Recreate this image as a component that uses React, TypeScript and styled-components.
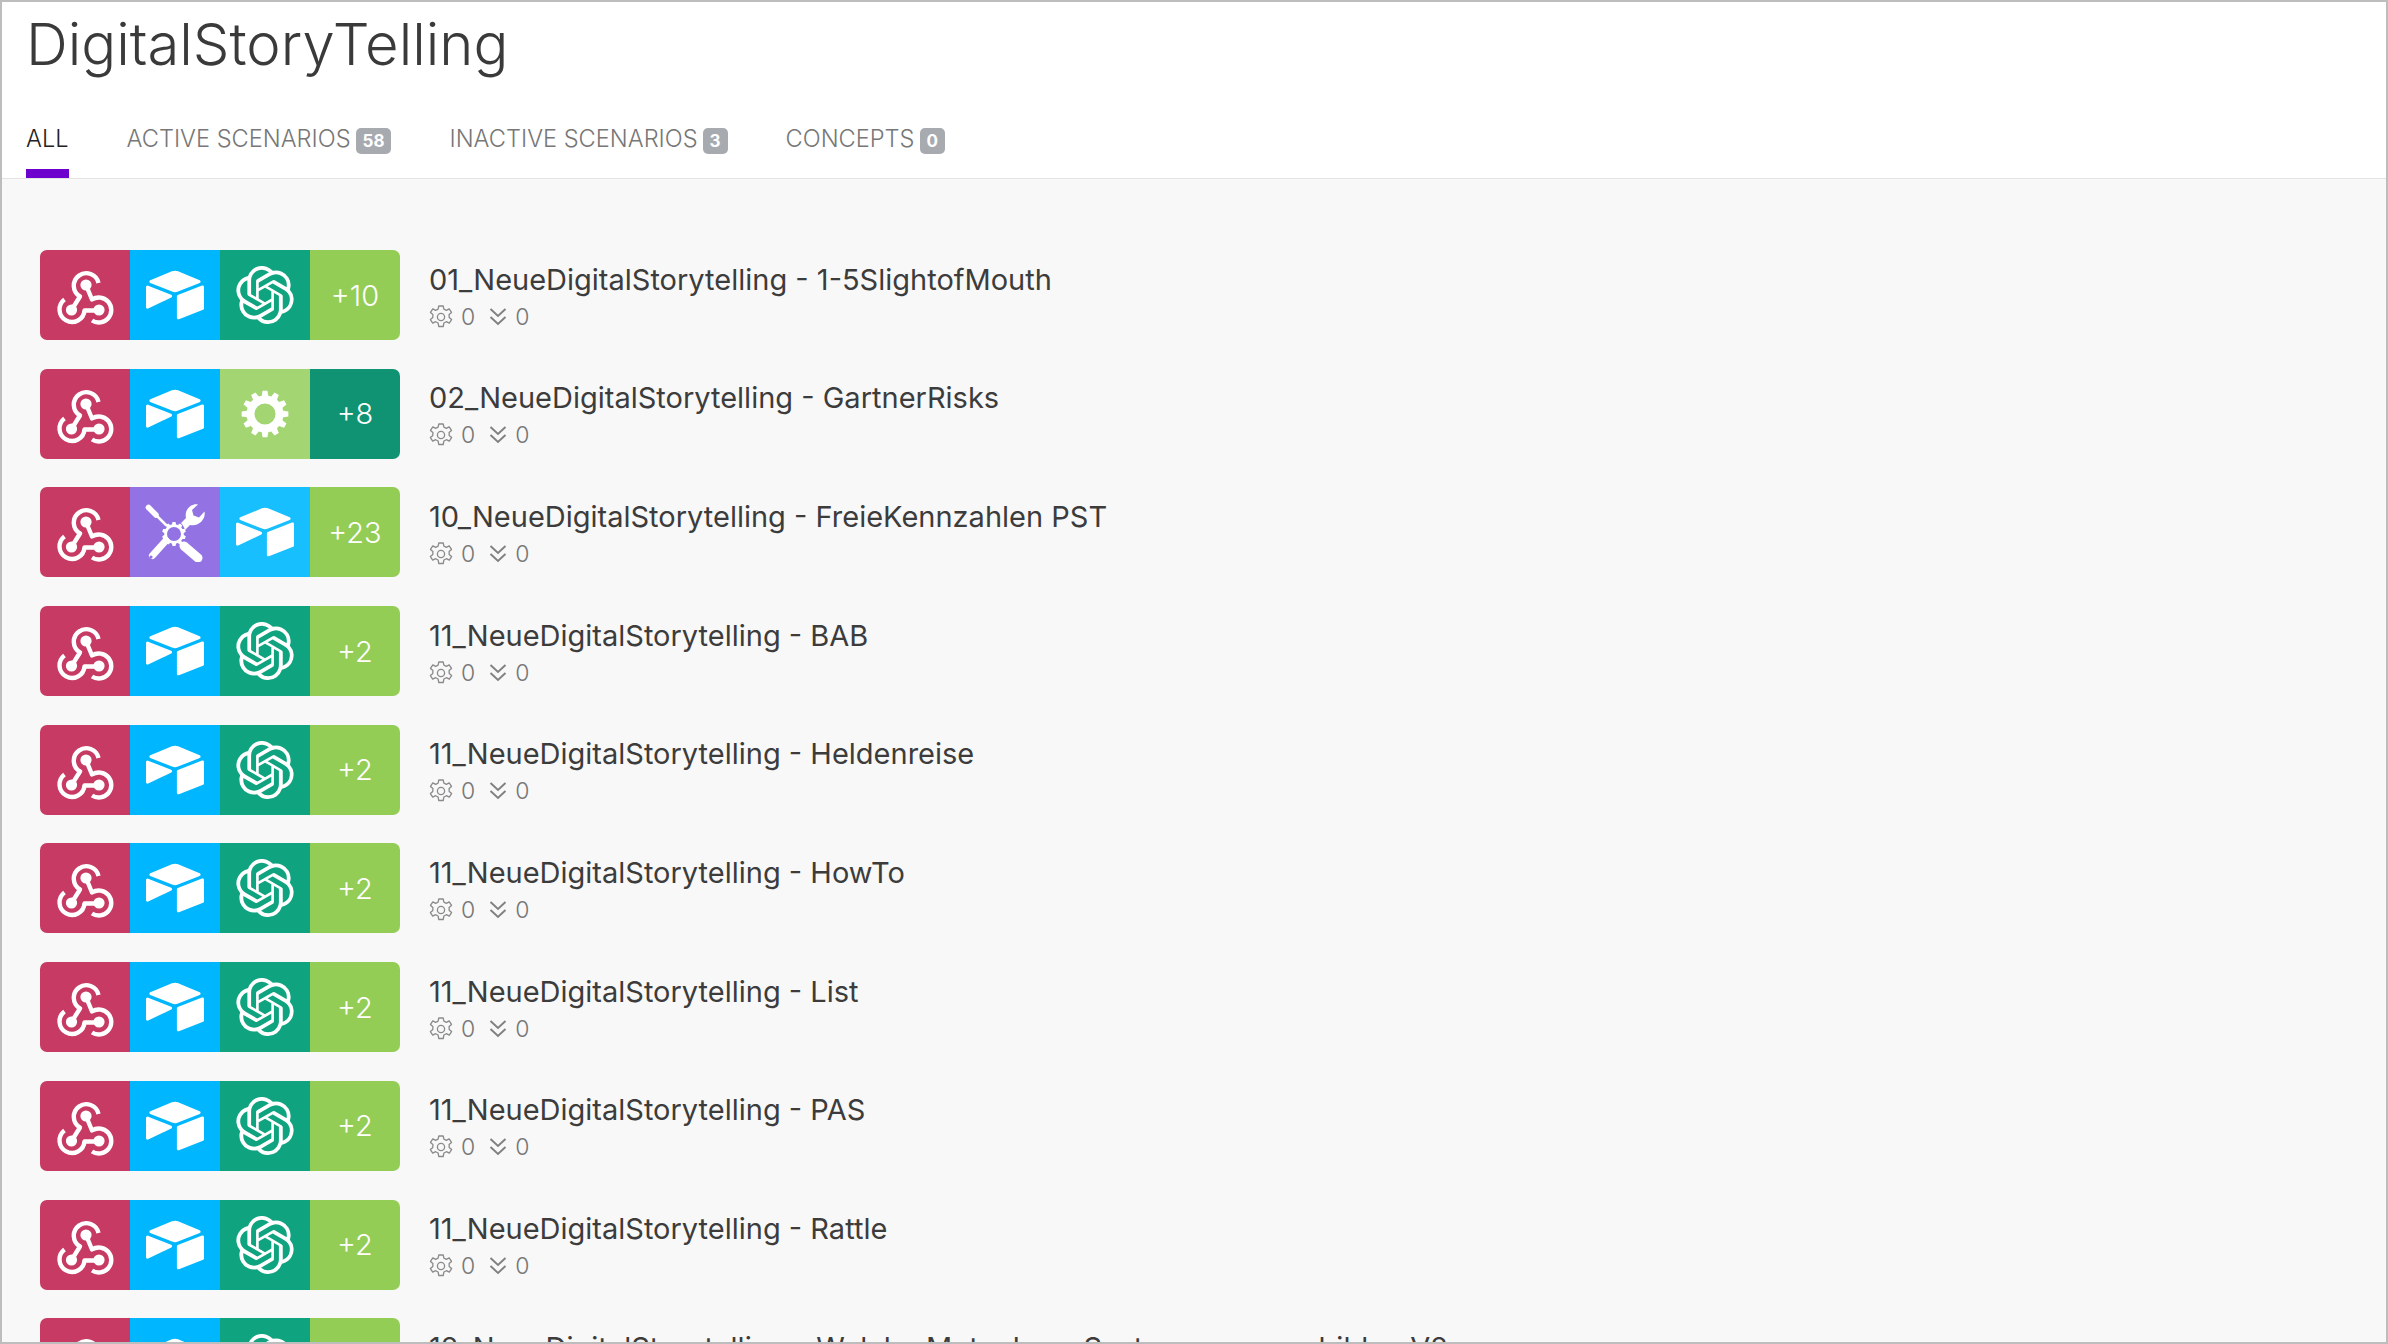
import React from "react";
import styled, { createGlobalStyle } from "styled-components";
import { SiAirtable, SiOpenai } from "react-icons/si";

const Global = createGlobalStyle`
  html, body { margin: 0; padding: 0; height: 100%; overflow: hidden; }
  body { font-family: Inter, "Liberation Sans", sans-serif; background: #f8f8f8; }
`;

const Frame = styled.div`
  box-sizing: border-box;
  width: 2388px;
  height: 1344px;
  border: 2px solid #bdbdbd;
  background: #f8f8f8;
  overflow: hidden;
`;

const Header = styled.header`
  background: #fff;
  border-bottom: 1px solid #e4e4e4;
  height: 177px;
  box-sizing: border-box;
  padding: 0 24px;
  display: flex;
  flex-direction: column;
  justify-content: space-between;
`;

const Title = styled.h1`
  margin: 7px 0 0 0;
  font-size: 58px;
  line-height: 70px;
  font-weight: 300;
  color: #3a3a3a;
`;

const Tabs = styled.nav`
  display: flex;
  gap: 58px;
`;

const Tab = styled.div<{ $active?: boolean }>`
  display: flex;
  align-items: flex-start;
  gap: 5px;
  font-size: 23.6px;
  line-height: 28px;
  font-weight: 300;
  text-transform: uppercase;
  color: ${(p) => (p.$active ? "#222" : "#777")};
  border-bottom: ${(p) => (p.$active ? "9px solid #6d00cc" : "9px solid transparent")};
  box-sizing: border-box;
  height: 53px;
`;

const Badge = styled.span`
  background: #a7aaaf;
  color: #fff;
  border-radius: 5px;
  font-size: 17px;
  font-weight: 700;
  line-height: 26px;
  height: 26px;
  padding: 0 7px;
  margin-top: 3px;
`;

const List = styled.main`
  display: flex;
  flex-direction: column;
  gap: 28.7px;
  padding: 71px 0 0 38px;
`;

const Row = styled.article`
  display: flex;
  align-items: center;
  gap: 29px;
  height: 90px;
  flex: none;
`;

const Stack = styled.div`
  display: flex;
  border-radius: 7px;
  overflow: hidden;
`;

const Cell = styled.div<{ $bg: string }>`
  width: 90px;
  height: 90px;
  background: ${(p) => p.$bg};
  color: #fff;
  display: flex;
  align-items: center;
  justify-content: center;
  font-size: 29px;
  font-weight: 300;
`;

const Info = styled.div`
  display: flex;
  flex-direction: column;
  gap: 7px;
  margin-top: 2px;
`;

const Name = styled.div`
  font-size: 29px;
  line-height: 34px;
  color: #3c3c3c;
  white-space: nowrap;
`;

const Stats = styled.div`
  display: flex;
  align-items: center;
  font-size: 23px;
  line-height: 26px;
  font-weight: 300;
  color: #777;
`;

const Stat = styled.span`
  display: inline-flex;
  align-items: center;
  gap: 8px;
  margin-right: 14px;
`;

const Webhook = () => (
  <svg width="90" height="90" viewBox="0 0 90 90" fill="none" stroke="#fff" strokeWidth="4.4" strokeLinejoin="round">
    <path d="M58.5 33A12.5 12.5 0 1 0 40 46.500L31.500 60" />
    <path d="M24.500 49.500A12.500 12.500 0 1 0 44.500 60.500H59" />
    <path d="M52 70.500A12.500 12.500 0 1 0 52 49.500L46 35" />
    <g fill="#fff" stroke="none">
      <circle cx="46" cy="35" r="5.600" />
      <circle cx="31.500" cy="60" r="5.600" />
      <circle cx="59" cy="60" r="5.600" />
    </g>
  </svg>
);

const gearPath = (cx: number, cy: number, teeth: number, ro: number, ri: number, hole: number) => {
  let d = "";
  const step = (Math.PI * 2) / teeth;
  for (let i = 0; i < teeth; i++) {
    const a = i * step - Math.PI / 2;
    const pts: [number, number][] = [
      [a - step * 0.34, ri],
      [a - step * 0.2, ro],
      [a + step * 0.2, ro],
      [a + step * 0.34, ri],
    ];
    pts.forEach(([t, r], j) => {
      d += `${i === 0 && j === 0 ? "M" : "L"}${(cx + r * Math.cos(t)).toFixed(2)} ${(cy + r * Math.sin(t)).toFixed(2)}`;
    });
  }
  d += `Z M${cx + hole} ${cy}A${hole} ${hole} 0 1 0 ${cx - hole} ${cy}A${hole} ${hole} 0 1 0 ${cx + hole} ${cy}Z`;
  return d;
};

const Gear = () => (
  <svg width="48" height="48" viewBox="0 0 48 48">
    <path fill="#fff" fillRule="evenodd" d={gearPath(24, 24, 12, 23.5, 18.5, 10.5)} />
  </svg>
);

const Tools = () => (
  <svg width="60" height="60" viewBox="0 0 60 60">
    <path fill="#fff" fillRule="evenodd" d={gearPath(29, 32, 10, 12, 9.8, 7)} />
    <g stroke="#fff" strokeLinecap="round" fill="none">
      <path d="M3.500 5.500L11 13" strokeWidth="5.500" />
      <path d="M11 13L21 23" strokeWidth="2.500" />
      <path d="M39 44L53 56" strokeWidth="9" />
      <path d="M21 38.500L7.500 53.500" strokeWidth="7" />
    </g>
    <circle cx="6" cy="55" r="1.600" fill="#9373e4" />
    <path
      fill="#fff"
      d="M36 21L41 16C39 8 46 1 53 2.500L47 8L48.500 13.500L54 15.500L59.500 9.500C61 17 54 25 45 23L40 28C39 25 38 23 36 21Z"
    />
  </svg>
);

const Overflow = ({ n, bg }: { n: number; bg: string }) => <Cell $bg={bg}>+{n}</Cell>;

const RED = "#c73a63";
const BLUE = "#00b7ff";
const TEAL = "#10a37f";
const GREEN = "#93cd55";

const webhook = <Cell $bg={RED}><Webhook /></Cell>;
const airtable = (bg = BLUE) => <Cell $bg={bg}><SiAirtable size={58} /></Cell>;
const openai = <Cell $bg={TEAL}><SiOpenai size={58} /></Cell>;

const std = (name: string, n: number) => ({
  name,
  cells: (
    <>
      {webhook}
      {airtable()}
      {openai}
      <Overflow n={n} bg={GREEN} />
    </>
  ),
});

const rows = [
  std("01_NeueDigitalStorytelling - 1-5SlightofMouth", 10),
  {
    name: "02_NeueDigitalStorytelling - GartnerRisks",
    cells: (
      <>
        {webhook}
        {airtable()}
        <Cell $bg="#a3d572"><Gear /></Cell>
        <Overflow n={8} bg="#0f9373" />
      </>
    ),
  },
  {
    name: "10_NeueDigitalStorytelling - FreieKennzahlen PST",
    cells: (
      <>
        {webhook}
        <Cell $bg="#9373e4"><Tools /></Cell>
        {airtable("#18bfff")}
        <Overflow n={23} bg={GREEN} />
      </>
    ),
  },
  std("11_NeueDigitalStorytelling - BAB", 2),
  std("11_NeueDigitalStorytelling - Heldenreise", 2),
  std("11_NeueDigitalStorytelling - HowTo", 2),
  std("11_NeueDigitalStorytelling - List", 2),
  std("11_NeueDigitalStorytelling - PAS", 2),
  std("11_NeueDigitalStorytelling - Rattle", 2),
  std("12_NeueDigitalStorytelling - Welche Metaphern Systemprozesse bilden V2", 2),
];

const SmallGear = () => (
  <svg width="24" height="24" viewBox="0 0 24 24" fill="none" stroke="#8a8a8a" strokeWidth="1.3" strokeLinejoin="round">
    <path d="M9.800 1h4.400l.7 3.200 2.400 1.100 2.900-1.500 2.300 3.600-2.400 2.200.1 2.800 2.400 2.200-2.300 3.600-3-1.500-2.400 1.300-.7 3.500H9.800l-.7-3.500-2.400-1.300-3 1.500-2.300-3.600 2.400-2.200.1-2.800-2.400-2.200 2.300-3.600 2.900 1.500 2.400-1.100z" />
    <circle cx="12" cy="12" r="3.600" />
  </svg>
);

const Chevrons = () => (
  <svg width="18" height="22" viewBox="0 0 18 22" fill="none" stroke="#808080" strokeWidth="1.9">
    <path d="M1.500 3l7.500 7 7.500-7" />
    <path d="M1.500 11l7.500 7 7.500-7" />
  </svg>
);

export default function App() {
  return (
    <Frame>
      <Global />
      <Header>
        <Title>DigitalStoryTelling</Title>
        <Tabs>
          <Tab $active>All</Tab>
          <Tab>Active Scenarios<Badge>58</Badge></Tab>
          <Tab>Inactive Scenarios<Badge>3</Badge></Tab>
          <Tab>Concepts<Badge>0</Badge></Tab>
        </Tabs>
      </Header>
      <List>
        {rows.map((r) => (
          <Row key={r.name}>
            <Stack>{r.cells}</Stack>
            <Info>
              <Name>{r.name}</Name>
              <Stats>
                <Stat><SmallGear />0</Stat>
                <Stat><Chevrons />0</Stat>
              </Stats>
            </Info>
          </Row>
        ))}
      </List>
    </Frame>
  );
}
